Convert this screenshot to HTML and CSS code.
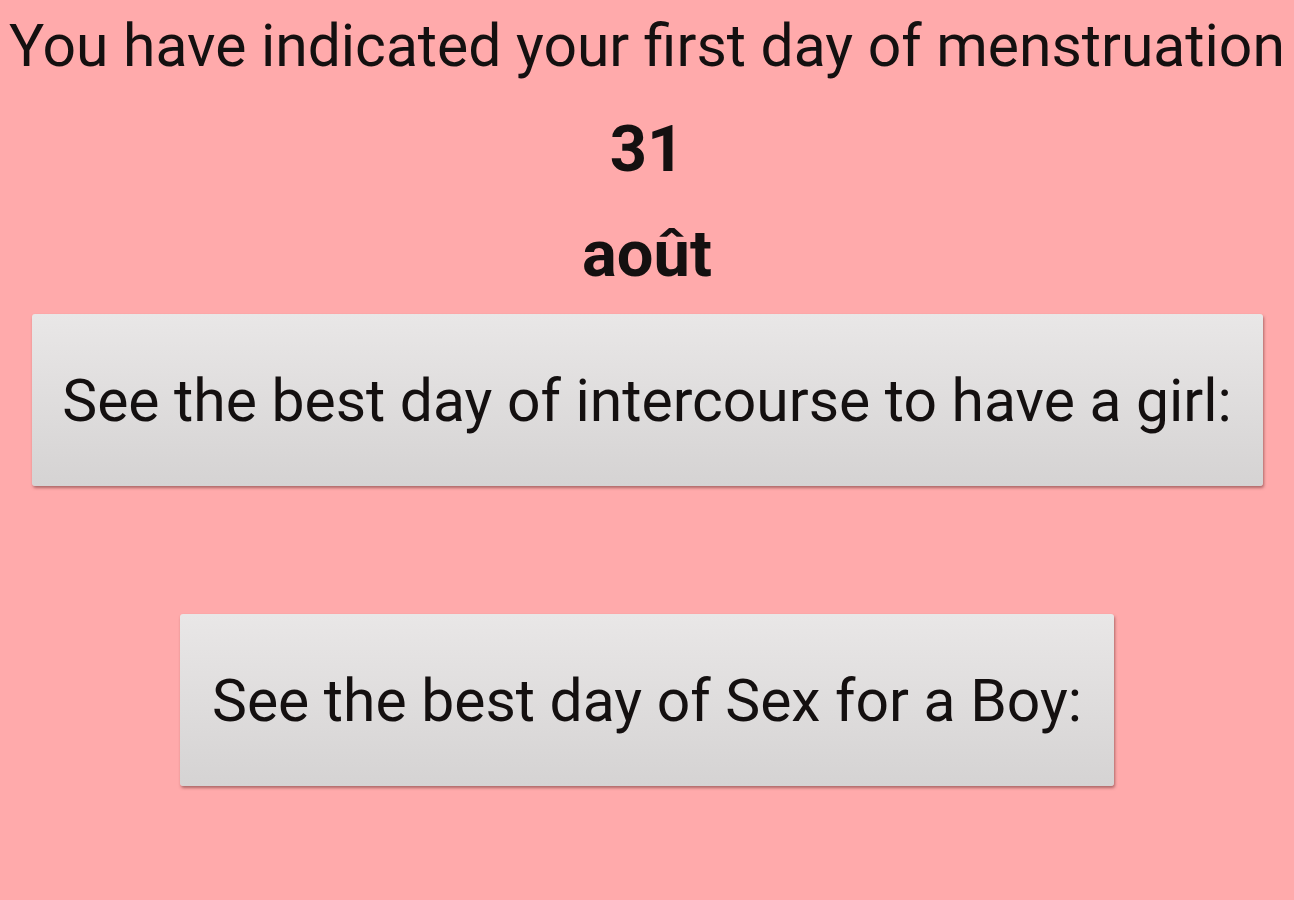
FILE: index.html
```html
<!DOCTYPE html>
<html>
<head>
<meta charset="utf-8">
<link rel="stylesheet" href="styles.css">
</head>
<body>
<main class="screen">
  <p class="intro">You have indicated your first day of menstruation</p>
  <p class="day">31</p>
  <p class="month">août</p>
  <div class="btn-row wide">
    <button class="btn">See the best day of intercourse to have a girl:</button>
  </div>
  <div class="btn-row narrow">
    <button class="btn">See the best day of Sex for a Boy:</button>
  </div>
</main>
</body>
</html>
```
FILE: styles.css
```css
html, body {
  margin: 0;
  padding: 0;
  background: #ffaaab;
  height: 100%;
}
.screen {
  font-family: Roboto, "Noto Sans", sans-serif;
  color: #141010;
  display: flex;
  flex-direction: column;
  align-items: center;
  height: 900px;
  overflow: hidden;
}
.intro {
  margin: 11px 0 0;
  font-size: 58.8px;
  line-height: 70px;
  white-space: nowrap;
}
.day, .month {
  margin: 0;
  font-weight: bold;
  font-size: 65px;
  line-height: 105px;
}
.day { margin-top: 16px; }
.btn-row {
  display: flex;
  justify-content: center;
  width: 100%;
}
.btn {
  font-family: Roboto, "Noto Sans", sans-serif;
  font-size: 58.8px;
  color: #141010;
  border: none;
  border-radius: 3px;
  background: linear-gradient(#e9e7e7, #d5d3d3);
  box-shadow: 1px 2px 3px rgba(120, 60, 60, 0.6);
  height: 172px;
  padding: 0;
  white-space: nowrap;
}
.wide { margin-top: 7px; }
.wide .btn { width: 1231px; }
.narrow { margin-top: 128px; }
.narrow .btn { width: 934px; }
```
